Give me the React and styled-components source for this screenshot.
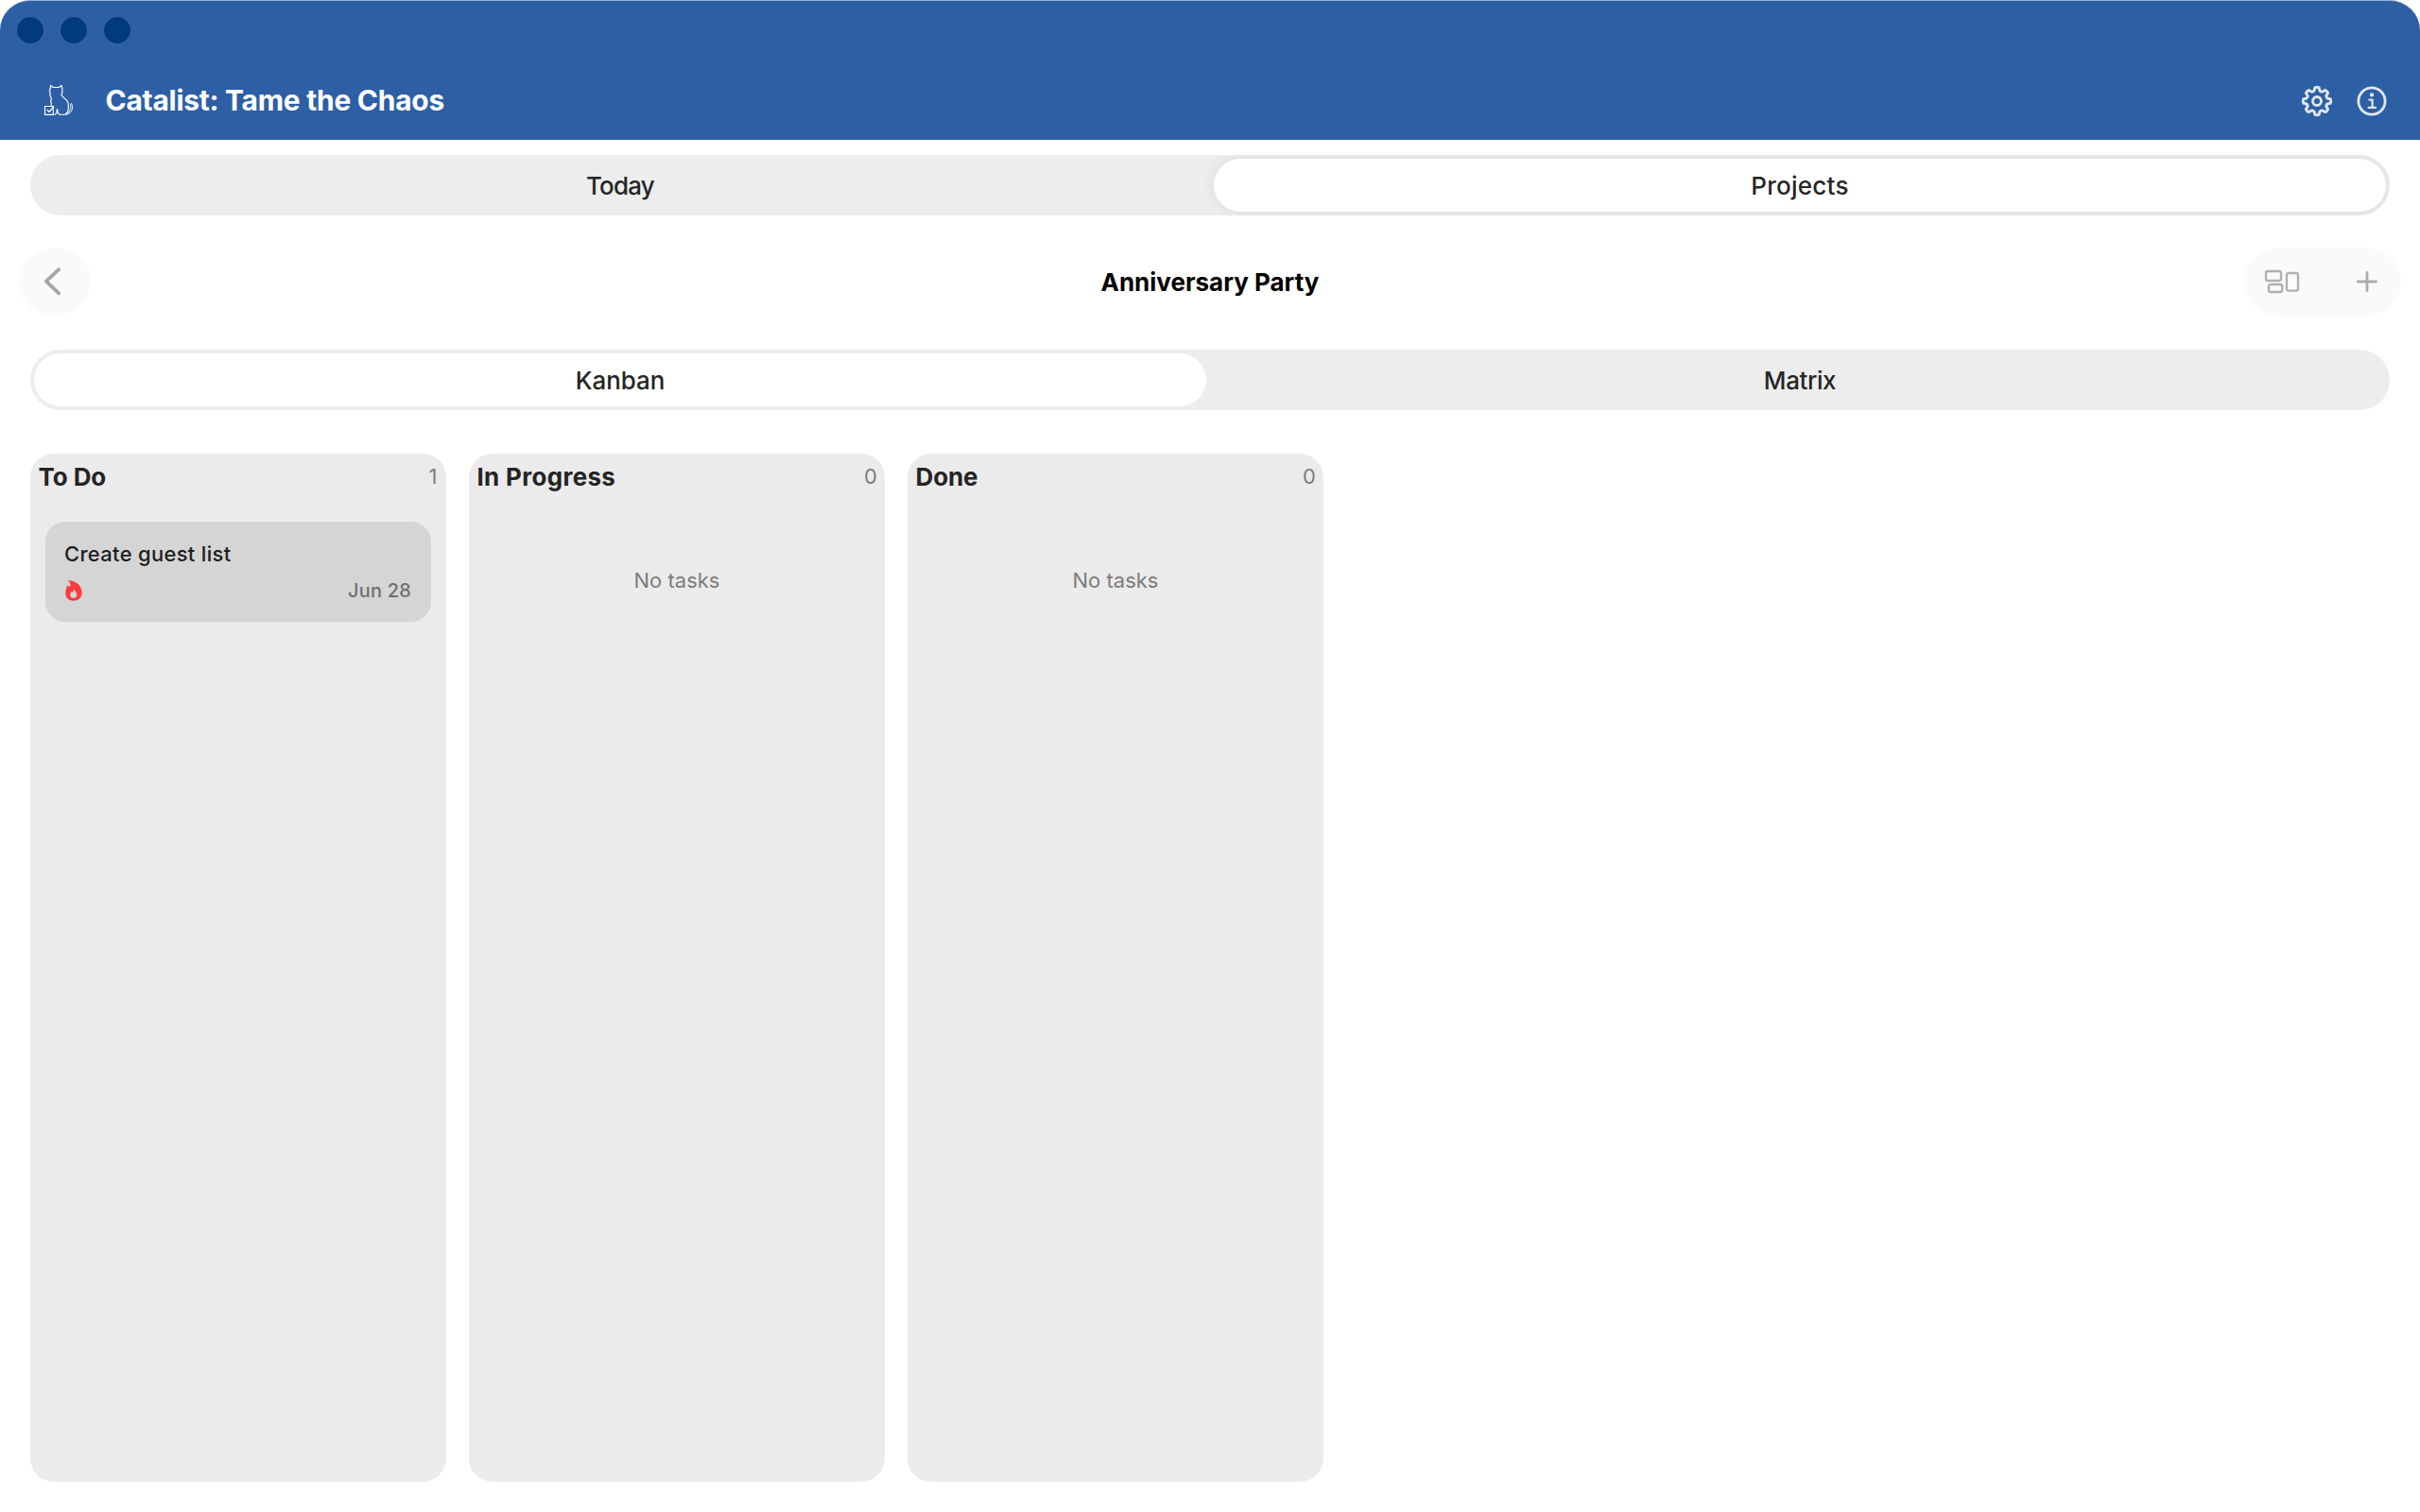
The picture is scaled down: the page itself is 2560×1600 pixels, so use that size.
import React from "react";
import styled, { createGlobalStyle } from "styled-components";

function CatLogo() {
  return (
    <svg width="32" height="34" viewBox="46 89 32 34" fill="none" stroke="#fff">
      <path
        d="M54.2 111.8V109L53.6 107L54.4 104.5L53 101V97.5L52.4 96L53.4 92.5L53.5 90.4L56.4 92.5H62.2L65 90.4L65.7 92.7L66 97L65 100.6L67.5 103.4L70.8 106.4L72.2 109.5L72.4 114.5L71.6 118.5L69 121.2H62.5L61.3 118.8L60.4 115.5L59.8 120L57.5 121.4"
        strokeWidth="1.15"
        strokeLinejoin="round"
      />
      <path
        d="M75.4 109.4Q77.6 112 76.4 115.8Q74.8 120.2 70.4 121.4L69.8 120.8Q73.6 119 74.6 115.4Q75.3 112.5 74.6 110.4Z"
        strokeWidth="0.9"
      />
      <path d="M47.5 112.5H56.3V121.4H47.5Z" strokeWidth="1.1" />
      <path d="M49.6 116.2L52 118.3L57 112.8" strokeWidth="1.3" />
    </svg>
  );
}

// eight-tooth gear outline around the origin
const gearPath = (() => {
  const at = (deg, r) => {
    const a = (deg * Math.PI) / 180;
    return `${(r * Math.sin(a)).toFixed(2)} ${(-r * Math.cos(a)).toFixed(2)}`;
  };
  let d = "";
  for (let k = 0; k < 8; k++) {
    const c = k * 45;
    d += `${k ? "L" : "M"}${at(c - 9, 14.4)}Q${at(c, 15.3)} ${at(c + 9, 14.4)}`;
    d += `L${at(c + 13, 12)}Q${at(c + 22.5, 9.9)} ${at(c + 32, 12)}`;
  }
  return d + "Z";
})();

function GearIcon() {
  return (
    <svg width="34" height="34" viewBox="-17 -17 34 34" fill="none" stroke="#e0e7f1">
      <path d={gearPath} strokeWidth="2.9" strokeLinejoin="round" />
      <circle r="4.5" strokeWidth="2.8" />
    </svg>
  );
}

function InfoIcon() {
  return (
    <svg width="34" height="34" viewBox="-17 -17 34 34" fill="none" stroke="#e0e7f1">
      <circle r="14.1" strokeWidth="2.8" />
      <circle cy="-6.6" r="2.1" fill="#e0e7f1" stroke="none" />
      <path
        d="M-2.6 -1.4H0.6V6.9M-3.4 6.9H4"
        strokeWidth="2.2"
        strokeLinecap="round"
        strokeLinejoin="round"
      />
    </svg>
  );
}

function ChevronIcon() {
  return (
    <svg width="20" height="30" viewBox="0 0 20 30" fill="none">
      <path
        d="M16.2 2.2L2.8 14.6L16.2 27.4"
        stroke="#a6a6a6"
        strokeWidth="3.7"
        strokeLinecap="round"
        strokeLinejoin="round"
      />
    </svg>
  );
}

function BoardIcon() {
  return (
    <svg width="38" height="26" viewBox="0 0 38 26" fill="none" stroke="#b0b0b0" strokeWidth="2.3">
      <rect x="2" y="2" width="16" height="10" rx="2" />
      <rect x="5" y="16" width="14.2" height="8" rx="2" />
      <rect x="24" y="4" width="12" height="18.6" rx="2" />
    </svg>
  );
}

function PlusIcon() {
  return (
    <svg width="22" height="22" viewBox="0 0 22 22">
      <path
        d="M11 1.4V20.6M1.4 11H20.6"
        stroke="#adadad"
        strokeWidth="2.8"
        strokeLinecap="round"
      />
    </svg>
  );
}

function FlameIcon() {
  return (
    <svg width="18" height="22" viewBox="0 0 54 66">
      <path
        d="M9 1.5C8 .6 9 .2 10.5 .4C34 1 53 17 53 39C53 55 43 65 27 65C11 65 1 55 1 41C1 32 4 24 6 18C7 15.5 9.5 16 10.5 19L12 22C13 19 16 18.5 17 15C17.5 10 13 5 9 1.5ZM29 29C27 32 24 35 23 39C21.5 38 21 37 20 36C17 39 16 43 16 47C16 53 20 57 26.5 57C33 57 37 53 37 46.5C37 39 30 36 30 29.5C30 28.5 29.5 28.5 29 29Z"
        fill="#ff3b3f"
        fillRule="evenodd"
      />
    </svg>
  );
}

const columns = [
  {
    title: "To Do",
    spacing: -0.1,
    tasks: [{ id: 1, name: "Create guest list", due: "Jun 28" }],
  },
  { title: "In Progress", spacing: 0.3, tasks: [] },
  { title: "Done", spacing: -0.1, tasks: [] },
];

function App() {
  return (
    <>
      <GlobalStyle />
      <Window>
        <Header>
          <TrafficLights>
            <Light />
            <Light />
            <Light />
          </TrafficLights>
          <TitleBar>
            <CatLogo />
            <AppTitle>Catalist: Tame the Chaos</AppTitle>
            <HeaderActions>
              <GearIcon />
              <InfoIcon />
            </HeaderActions>
          </TitleBar>
        </Header>

        <Segmented>
          <Segment $spacing={-0.8}>Today</Segment>
          <Segment $active $shadow $spacing={0.25}>
            Projects
          </Segment>
        </Segmented>

        <NavBar>
          <BackButton>
            <ChevronIcon />
          </BackButton>
          <PageTitle>Anniversary Party</PageTitle>
          <NavActions>
            <BoardIcon />
            <PlusIcon />
          </NavActions>
        </NavBar>

        <Segmented>
          <Segment $active $spacing={-0.1}>
            Kanban
          </Segment>
          <Segment $spacing={-0.4}>Matrix</Segment>
        </Segmented>

        <Board>
          {columns.map((col) => (
            <Column key={col.title}>
              <ColumnHeader>
                <ColumnTitle $spacing={col.spacing}>{col.title}</ColumnTitle>
                <Count>{col.tasks.length}</Count>
              </ColumnHeader>
              {col.tasks.map((task) => (
                <Card key={task.id}>
                  <TaskName>{task.name}</TaskName>
                  <CardFooter>
                    <FlameIcon />
                    <DueDate>{task.due}</DueDate>
                  </CardFooter>
                </Card>
              ))}
              {col.tasks.length === 0 && <Empty>No tasks</Empty>}
            </Column>
          ))}
        </Board>
      </Window>
    </>
  );
}

export default App;

const GlobalStyle = createGlobalStyle`
  * {
    box-sizing: border-box;
  }

  body {
    margin: 0;
    background: #fff;
    font-family: Inter, "Liberation Sans", sans-serif;
    overflow: hidden;
  }

  svg {
    display: block;
    flex: none;
  }
`;

const Window = styled.div`
  width: 2560px;
  height: 1600px;
  display: flex;
  flex-direction: column;
  background: #fff;
`;

const Header = styled.header`
  height: 148px;
  flex: none;
  background: #2d5fa4;
  border-top: 1px solid #9bb2d3;
  border-radius: 32px 32px 0 0;
`;

const TrafficLights = styled.div`
  display: flex;
  gap: 18px;
  padding: 17px 0 0 18px;
`;

const Light = styled.div`
  width: 28px;
  height: 28px;
  border-radius: 50%;
  background: #003b7d;
  border: 1px solid #043775;
`;

const TitleBar = styled.div`
  display: flex;
  align-items: center;
  height: 60px;
  margin-top: 30px;
  padding: 0 34px 0 46px;
`;

const AppTitle = styled.h1`
  margin: 0 auto 0 33.5px;
  font-size: 30px;
  font-weight: 700;
  letter-spacing: -0.28px;
  color: #fff;
`;

const HeaderActions = styled.div`
  display: flex;
  gap: 24px;
  padding-top: 1px;
`;

const Segmented = styled.div`
  display: grid;
  grid-template-columns: 1fr 1fr;
  gap: 8px;
  height: 64px;
  margin: 16px 32px 0;
  padding: 4px;
  flex: none;
  border-radius: 32px;
  background: #ededed;
  overflow: hidden;
`;

const Segment = styled.div`
  display: flex;
  align-items: center;
  justify-content: center;
  border-radius: 28px;
  font-size: 26px;
  font-weight: 500;
  letter-spacing: ${(p) => p.$spacing || 0}px;
  color: #262626;
  background: ${(p) => (p.$active ? "#fff" : "transparent")};
  box-shadow: ${(p) => (p.$shadow ? "0 0 16px rgba(0, 0, 0, 0.08)" : "none")};
`;

const NavBar = styled.nav`
  display: grid;
  grid-template-columns: 1fr auto 1fr;
  align-items: center;
  height: 72px;
  margin: 34px 20px 20px;
  flex: none;
`;

const BackButton = styled.div`
  width: 76px;
  height: 72px;
  padding-right: 5px;
  display: flex;
  align-items: center;
  justify-content: center;
  border-radius: 38px / 36px;
  background: #fafafa;
`;

const PageTitle = styled.h2`
  margin: 0;
  font-size: 26px;
  font-weight: 700;
  color: #000;
`;

const NavActions = styled.div`
  display: flex;
  align-items: center;
  justify-content: space-between;
  justify-self: end;
  width: 167px;
  height: 72px;
  padding: 0 25.5px 0 22px;
  border-radius: 38px / 36px;
  background: #fafafa;
`;

const Board = styled.main`
  display: flex;
  gap: 24px;
  margin: 46px 32px 32px;
  flex: 1;
`;

const Column = styled.section`
  width: 440px;
  border-radius: 25px;
  background: #ebebeb;
`;

const ColumnHeader = styled.div`
  display: flex;
  align-items: center;
  justify-content: space-between;
  height: 48px;
  padding: 0 8px 0 8.5px;
`;

const ColumnTitle = styled.h3`
  margin: 0;
  font-size: 26px;
  font-weight: 700;
  letter-spacing: ${(p) => p.$spacing}px;
  color: #242424;
`;

const Count = styled.span`
  font-size: 22px;
  min-width: 10.5px;
  color: #7c7c7c;
`;

const Card = styled.div`
  margin: 24px 16px 0;
  padding: 20px;
  border-radius: 21px;
  background: #d5d5d5;
`;

const TaskName = styled.div`
  font-size: 22px;
  line-height: 28px;
  font-weight: 500;
  letter-spacing: 0.3px;
  color: #202020;
`;

const CardFooter = styled.div`
  display: flex;
  align-items: center;
  justify-content: space-between;
  height: 26px;
  margin-top: 12px;
  padding: 0 1px;
`;

const DueDate = styled.span`
  font-size: 20px;
  font-weight: 500;
  letter-spacing: 0.2px;
  color: #707070;
`;

const Empty = styled.div`
  padding-top: 72px;
  font-size: 22px;
  line-height: 28px;
  text-align: center;
  color: #7c7c7c;
`;
